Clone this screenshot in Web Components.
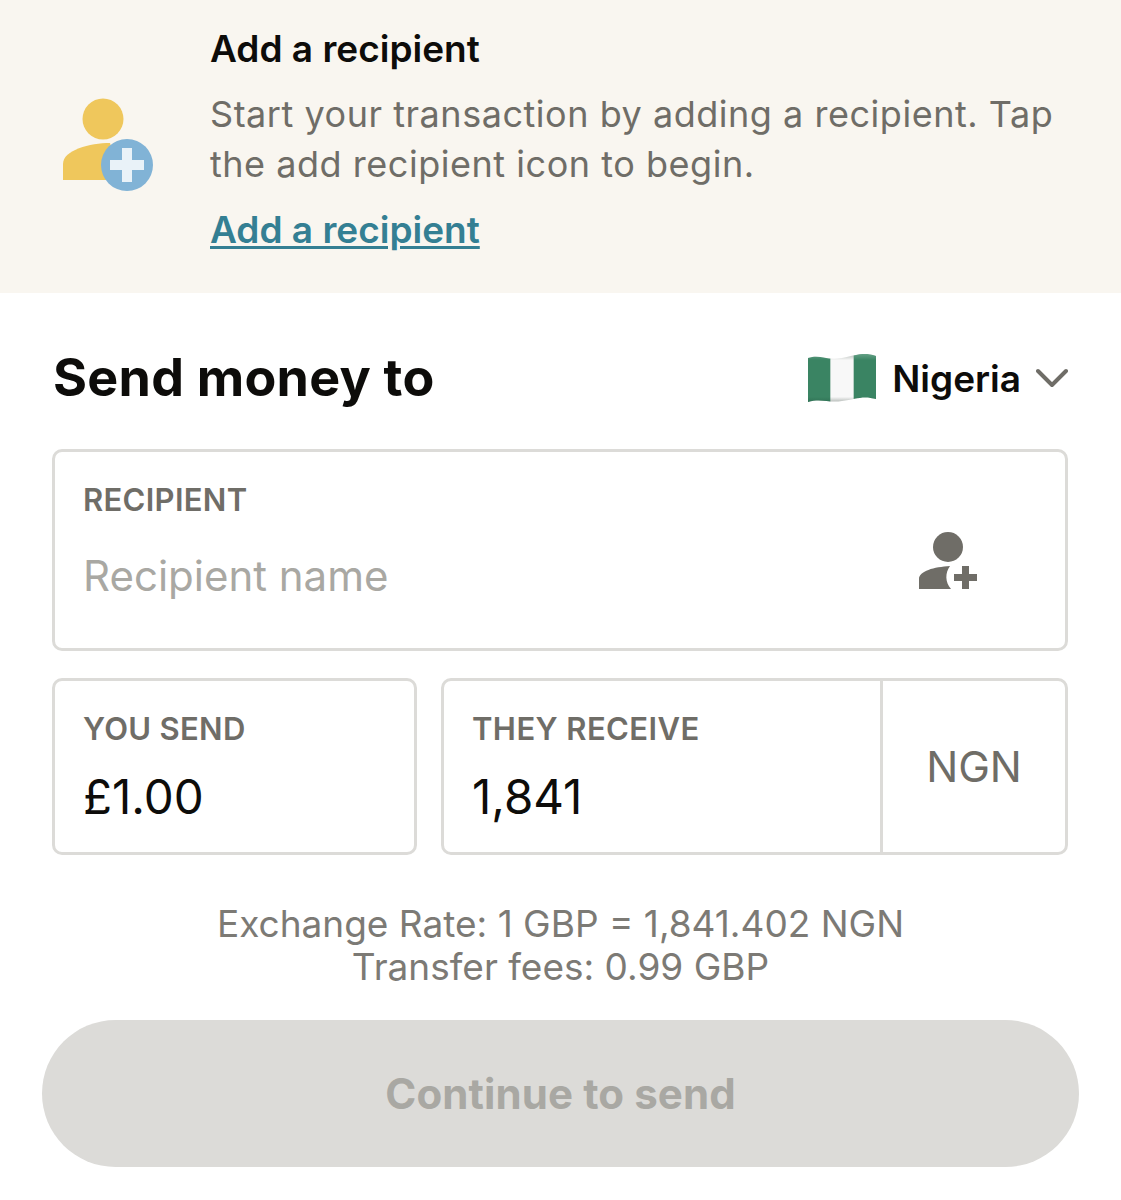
<!DOCTYPE html>
<html><head><meta charset="utf-8"><style>
html,body{margin:0;padding:0;background:#fff;font-family:Inter,"Liberation Sans",sans-serif;}
</style></head><body>
<send-page></send-page>
<script>
const def=(name,css,html)=>customElements.define(name,class extends HTMLElement{constructor(){super();this.attachShadow({mode:'open'}).innerHTML=`<style>${css}</style>${typeof html==='function'?html(this):html}`;}});
def('recipient-banner',`:host{display:flex;box-sizing:border-box;height:293px;background:#f9f6f0;padding-top:27px}
.ic{width:210px;flex:none;display:flex;align-items:flex-start}
svg{margin-left:62px;margin-top:71px;display:block}
.b{flex:1}
h3{margin:0;font-size:37px;line-height:44px;font-weight:600;color:#0d0c0a}
p{margin:18px 0 0;font-size:36px;line-height:50px;color:#6f6d67;width:880px;letter-spacing:.53px}
a{display:block;margin-top:19px;font-size:37px;line-height:44px;font-weight:600;color:#347f93;text-decoration:underline;text-underline-offset:3px}`,
`<div class="ic"><svg width="92" height="94" viewBox="0 0 92 94"><circle cx="41" cy="21" r="20.5" fill="#efc75c"/><path d="M1 82V66C1 52 28 45 48 45L60 82Z" fill="#efc75c"/><circle cx="65" cy="67" r="26" fill="#81b3d6"/><path d="M60 50h10v12h12v10H70v12H60V72H48V62h12z" fill="#e9f2f8"/></svg></div>
<div class="b"><h3>Add a recipient</h3><p>Start your transaction by adding a recipient. Tap the add recipient icon to begin.</p><a>Add a recipient</a></div>`);
def('send-header',`:host{display:flex;align-items:flex-start;justify-content:space-between;height:157px;padding:56px 53px 0;box-sizing:border-box;margin-top:-1px}
h2{margin:0;font-size:52px;line-height:60px;font-weight:700;color:#0d0c0a;letter-spacing:.25px}
.r{display:flex;align-items:center;height:60px}
b{font-size:37px;font-weight:600;color:#0d0c0a;margin-left:15px}
.f{display:block}.c{display:block;margin-left:15px}`,
`<h2>Send money to</h2><div class="r"><svg class="f" width="70" height="51" viewBox="0 0 72 52" preserveAspectRatio="none"><defs><clipPath id="w"><path d="M1 5C14 1 20 8 36 5S58-1 71 3V47C58 43 50 47 36 49S14 46 1 50Z"/></clipPath><linearGradient id="g" x1="0" y1="0" x2="0" y2="1"><stop offset="0" stop-color="#aab2ad"/><stop offset=".14" stop-color="#f8f8f8"/><stop offset=".86" stop-color="#f8f8f8"/><stop offset="1" stop-color="#9aa29d"/></linearGradient><linearGradient id="h" x1="0" y1="0" x2="0" y2="1"><stop offset="0" stop-color="#6aa58b"/><stop offset=".14" stop-color="#3a8463"/><stop offset=".86" stop-color="#3a8463"/><stop offset="1" stop-color="#2c6b50"/></linearGradient></defs><g clip-path="url(#w)"><rect width="72" height="52" fill="url(#g)"/><rect width="24" height="52" fill="url(#h)"/><rect x="48" width="24" height="52" fill="url(#h)"/></g></svg><b>Nigeria</b><svg class="c" width="32" height="20" viewBox="0 0 32 20"><path d="M2 3l14 14L30 3" fill="none" stroke="#6f6d67" stroke-width="4" stroke-linecap="round" stroke-linejoin="round"/></svg></div>`);
def('field-box',`:host{display:flex;flex-direction:column;box-sizing:border-box;padding:30px 29px 0 28px;border:3px solid #dcdbd8;border-radius:10px;background:#fff}
label{font-size:31px;line-height:36px;font-weight:600;color:#6f6d67;letter-spacing:.3px;display:block}
.v{font-size:var(--fs,47.5px);line-height:50px;margin-top:var(--gap,25px);color:var(--v,#0d0c0a)}`,
t=>`<label>${t.getAttribute('label')}</label><div class="v"><slot></slot></div>`);
def('they-receive',`:host{display:flex;box-sizing:border-box;border:3px solid #dcdbd8;border-radius:10px;background:#fff}
.a{flex:1;padding:30px 28px 0;}
label{font-size:31px;line-height:36px;font-weight:600;color:#6f6d67;letter-spacing:.4px;display:block}
.v{font-size:47.5px;line-height:50px;margin-top:25px;color:#0d0c0a}
.c{width:182px;flex:none;border-left:3px solid #dcdbd8;display:flex;align-items:center;justify-content:center;font-size:42.5px;color:#6f6d67}`,
`<div class="a"><label>THEY RECEIVE</label><div class="v">1,841</div></div><div class="c">NGN</div>`);
def('cta-button',`:host{display:flex;align-items:center;justify-content:center;height:147px;margin:0 42px;border-radius:74px;background:#dcdbd8;font-size:42px;font-weight:700;color:#a9a8a3;letter-spacing:.1px}`,`<slot></slot>`);
def('rate-note',`:host{display:block;text-align:center;font-size:37px;line-height:43px;color:#7c7a75}`,`<slot></slot>`);
def('recipient-field',`:host{display:block;position:relative;height:202px;margin:0 53px 0 52px}
field-box{height:202px;--v:#a9a8a3;--fs:42px;--gap:33px}
svg{position:absolute;right:90px;top:83px}`,
`<field-box label="RECIPIENT">Recipient name</field-box><svg width="60" height="60" viewBox="0 0 60 60"><circle cx="30" cy="15" r="15" fill="#6f6d67"/><path d="M1 57V47C1 39 16 35 32 34C27 41 27 50 33 57Z" fill="#6f6d67"/><path d="M36 42h8v-8h7v8h8v7h-8v8h-7v-8h-8z" fill="#6f6d67"/></svg>`);
def('send-page',`:host{display:block;height:1200px;overflow:hidden}
.row{display:flex;gap:24px;margin:27px 53px 0 52px;height:177px}
field-box{width:365px;flex:none}
they-receive{flex:1}
rate-note{margin-top:47px}
cta-button{margin-top:32px}`,
`<recipient-banner></recipient-banner><send-header></send-header><recipient-field></recipient-field>
<div class="row"><field-box label="YOU SEND">£1.00</field-box><they-receive></they-receive></div>
<rate-note>Exchange Rate: 1 GBP = 1,841.402 NGN<br>Transfer fees: 0.99 GBP</rate-note>
<cta-button>Continue to send</cta-button>`);
</script></body></html>
